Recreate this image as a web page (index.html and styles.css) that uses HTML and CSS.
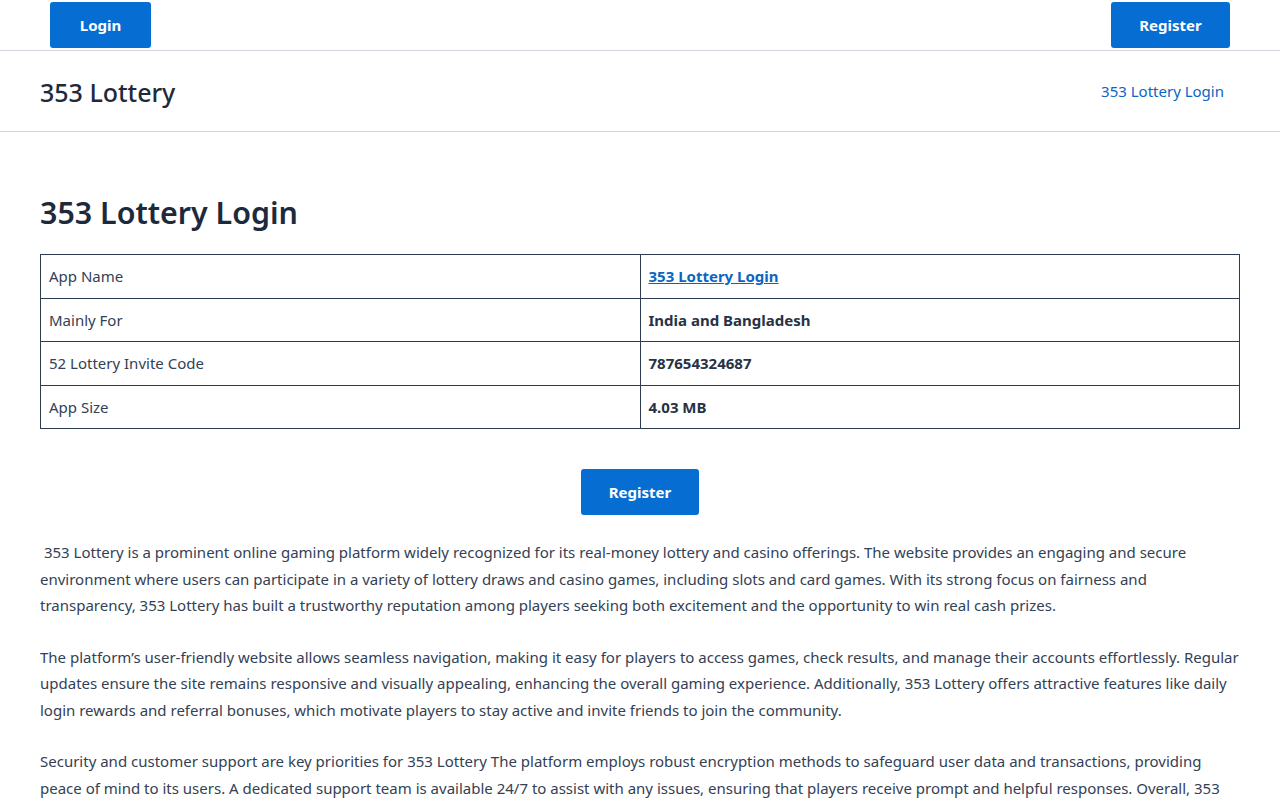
FILE: index.html
```html
<!DOCTYPE html>
<html lang="en">
<head>
<meta charset="utf-8">
<title>353 Lottery Login</title>
<link rel="stylesheet" href="styles.css">
</head>
<body>
<div class="topbar">
  <a class="btn btn-login" href="#">Login</a>
  <a class="btn btn-register" href="#">Register</a>
</div>
<header class="site-header">
  <div class="brand">353 Lottery</div>
  <a class="nav-link" href="#">353 Lottery Login</a>
</header>
<main class="content">
  <h1 class="title">353 Lottery Login</h1>
  <table class="info">
    <tr><td>App Name</td><td class="val"><a href="#">353 Lottery Login</a></td></tr>
    <tr><td>Mainly For</td><td class="val">India and Bangladesh</td></tr>
    <tr><td>52 Lottery Invite Code</td><td class="val">787654324687</td></tr>
    <tr><td>App Size</td><td class="val">4.03 MB</td></tr>
  </table>
  <div class="cta"><a class="btn btn-center" href="#">Register</a></div>
  <p>&nbsp;353 Lottery is a prominent online gaming platform widely recognized for its real-money lottery and casino offerings. The website provides an engaging and secure environment where users can participate in a variety of lottery draws and casino games, including slots and card games. With its strong focus on fairness and transparency, 353 Lottery has built a trustworthy reputation among players seeking both excitement and the opportunity to win real cash prizes.</p>
  <p>The platform’s user-friendly website allows seamless navigation, making it easy for players to access games, check results, and manage their accounts effortlessly. Regular updates ensure the site remains responsive and visually appealing, enhancing the overall gaming experience. Additionally, 353 Lottery offers attractive features like daily login rewards and referral bonuses, which motivate players to stay active and invite friends to join the community.</p>
  <p>Security and customer support are key priorities for 353 Lottery The platform employs robust encryption methods to safeguard user data and transactions, providing peace of mind to its users. A dedicated support team is available 24/7 to assist with any issues, ensuring that players receive prompt and helpful responses. Overall, 353 Lottery stands out as a reliable choice for online lottery and casino entertainment.</p>
</main>
</body>
</html>
```

FILE: styles.css
```css
* { box-sizing: border-box; }
html, body { margin: 0; padding: 0; }
body {
  font-family: "Noto Sans", "Open Sans", sans-serif;
  color: #334155;
  background: #fff;
}
a { color: #0a66c2; text-decoration: none; }

.topbar {
  display: flex;
  justify-content: space-between;
  align-items: flex-start;
  padding: 2px 50px 2px 50px;
  border-bottom: 1px solid #d4d4dc;
  height: 51px;
}
.btn {
  display: inline-flex;
  align-items: center;
  justify-content: center;
  height: 46px;
  background: #066dd3;
  color: #fff;
  font-weight: 700;
  font-size: 15px;
  border-radius: 3px;
}
.btn-login { width: 101px; }
.btn-register { width: 119px; }
.btn-center { width: 118px; }

.site-header {
  display: flex;
  justify-content: space-between;
  align-items: center;
  height: 81px;
  padding: 0 56px 0 40px;
  border-bottom: 1px solid #d4d4dc;
}
.brand {
  font-size: 25px;
  font-weight: 500;
  color: #1e293b;
  margin-top: 1px;
}
.nav-link {
  font-size: 15px;
  color: #0a66c2;
  margin-top: -1px;
}

.content {
  padding: 58px 40px 0 40px;
}
.title {
  margin: 0 0 18px 0;
  font-size: 30.4px;
  font-weight: 600;
  color: #1e293b;
  line-height: 46px;
}
.info {
  width: 100%;
  border-collapse: collapse;
  table-layout: fixed;
  font-size: 15px;
}
.info td {
  border: 1px solid #2d3b50;
  height: 43.5px;
  padding: 0 8px;
  color: #334155;
}
.info td.val {
  font-weight: 700;
  color: #263245;
}
.info td.val a {
  color: #0a66c2;
  text-decoration: underline;
}
.cta {
  display: flex;
  justify-content: center;
  margin: 40px 0 24px 0;
}
.content p {
  margin: 0 0 25px 0;
  font-size: 15px;
  line-height: 26.5px;
  color: #334155;
}
```
